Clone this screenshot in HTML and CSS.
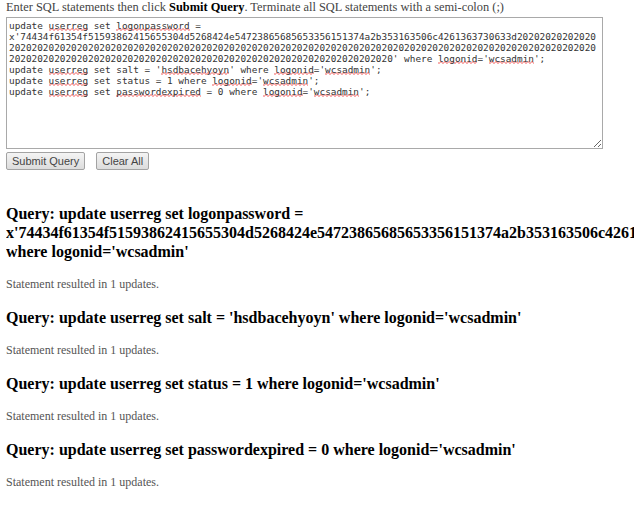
FILE: index.html
```html
<!DOCTYPE html>
<html lang="en">
<head>
    <meta charset="UTF-8">
    <meta name="viewport" content="width=device-width, initial-scale=1.0">
    <title>SQL Query</title>
    <link rel="stylesheet" href="styles.css">
</head>
<body>
    <form class="sql-form">
        <div class="intro">Enter SQL statements then click <b>Submit Query</b>. Terminate all SQL statements with a semi-colon (;)</div>
        <div class="sql-box" role="textbox" aria-multiline="true">update <span class="typo">userreg</span> set <span class="typo">logonpassword</span> = x'74434f61354f51593862415655304d5268424e54723865685653356151374a2b353163506c4261363730633d202020202020202020202020202020202020202020202020202020202020202020202020202020202020202020202020202020202020202020202020202020202020202020202020202020202020202020202020202020202020202020' where <span class="typo">logonid</span>='<span class="typo">wcsadmin</span>';
update <span class="typo">userreg</span> set salt = '<span class="typo">hsdbacehyoyn</span>' where <span class="typo">logonid</span>='<span class="typo">wcsadmin</span>';
update <span class="typo">userreg</span> set status = 1 where <span class="typo">logonid</span>='<span class="typo">wcsadmin</span>';
update <span class="typo">userreg</span> set <span class="typo">passwordexpired</span> = 0 where <span class="typo">logonid</span>='<span class="typo">wcsadmin</span>';</div>
        <div class="actions">
            <button type="button">Submit Query</button>
            <button type="button">Clear All</button>
        </div>
    </form>

    <div class="results">
        <h3>Query: update userreg set logonpassword = x'74434f61354f51593862415655304d5268424e54723865685653356151374a2b353163506c4261363730633d202020202020202020202020202020202020202020202020202020202020202020202020202020202020202020202020202020202020202020202020202020202020202020202020202020202020202020202020202020202020202020' where logonid='wcsadmin'</h3>
        <p>Statement resulted in 1 updates.</p>

        <h3>Query: update userreg set salt = 'hsdbacehyoyn' where logonid='wcsadmin'</h3>
        <p>Statement resulted in 1 updates.</p>

        <h3>Query: update userreg set status = 1 where logonid='wcsadmin'</h3>
        <p>Statement resulted in 1 updates.</p>

        <h3>Query: update userreg set passwordexpired = 0 where logonid='wcsadmin'</h3>
        <p>Statement resulted in 1 updates.</p>
    </div>
</body>
</html>
```

FILE: styles.css
```css
html {
    overflow-x: hidden;
}
body {
    font-family: "Liberation Serif", "Times New Roman", serif;
    margin: 0 6px;
    background: #fff;
    color: #000;
}
.intro {
    font-size: 12.4px;
    line-height: 14px;
    color: #444;
}
.intro b {
    color: #000;
}
.sql-box {
    box-sizing: border-box;
    width: 597px;
    height: 132px;
    margin-top: 3px;
    padding: 2px 2px;
    border: 1px solid #a9a9a9;
    font-family: "DejaVu Sans Mono", "Liberation Mono", monospace;
    font-size: 9.4px;
    line-height: 11px;
    color: #333;
    white-space: pre-wrap;
    overflow-wrap: anywhere;
    overflow: auto;
    resize: both;
}
/* spell-check style squiggle: alternating dots on two rows */
.typo {
    background-image:
        radial-gradient(circle at 1px 2px, #f05050 0.6px, transparent 0.8px),
        radial-gradient(circle at 3px 1px, #f05050 0.6px, transparent 0.8px);
    background-size: 4px 3px;
    background-repeat: repeat-x;
    background-position: 0 100%;
}
.actions {
    display: flex;
    gap: 11px;
    margin-top: 3px;
}
button {
    font-family: "Liberation Sans", Arial, sans-serif;
    font-size: 11px;
    color: #444;
    height: 18px;
    padding: 0 5px;
    border: 1px solid #a3a3a3;
    border-radius: 2px;
    background: linear-gradient(#f4f4f4, #dcdcdc);
}
.results {
    margin-top: 34px;
}
.results h3 {
    font-size: 16px;
    line-height: 19px;
    margin: 0;
}
.results p {
    font-size: 12px;
    line-height: 13px;
    color: #555;
    margin: 17px 0;
}
```
